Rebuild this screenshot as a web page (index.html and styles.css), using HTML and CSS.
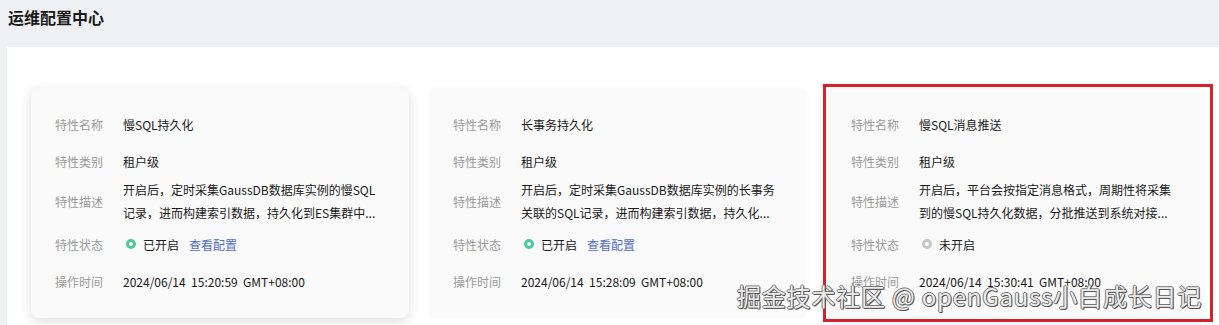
FILE: index.html
```html
<!DOCTYPE html>
<html lang="zh-CN">
<head>
    <meta charset="UTF-8">
    <meta name="viewport" content="width=device-width, initial-scale=1.0">
    <title>运维配置中心</title>
    <link rel="stylesheet" href="styles.css">
</head>
<body>
    <h1 class="page-title">运维配置中心</h1>

    <div class="panel">
        <div class="card-list">
            <div class="card card-active">
                <div class="row">
                    <span class="label">特性名称</span>
                    <span class="value">慢SQL持久化</span>
                </div>
                <div class="row">
                    <span class="label">特性类别</span>
                    <span class="value">租户级</span>
                </div>
                <div class="row row-desc">
                    <span class="label">特性描述</span>
                    <span class="value desc">开启后，定时采集GaussDB数据库实例的慢SQL<br>记录，进而构建索引数据，持久化到ES集群中...</span>
                </div>
                <div class="row">
                    <span class="label">特性状态</span>
                    <span class="value status">
                        <span class="dot dot-on"></span>
                        <span>已开启</span>
                        <a class="link" href="#">查看配置</a>
                    </span>
                </div>
                <div class="row">
                    <span class="label">操作时间</span>
                    <span class="value time">2024/06/14  15:20:59  GMT+08:00</span>
                </div>
            </div>

            <div class="card">
                <div class="row">
                    <span class="label">特性名称</span>
                    <span class="value">长事务持久化</span>
                </div>
                <div class="row">
                    <span class="label">特性类别</span>
                    <span class="value">租户级</span>
                </div>
                <div class="row row-desc">
                    <span class="label">特性描述</span>
                    <span class="value desc">开启后，定时采集GaussDB数据库实例的长事务<br>关联的SQL记录，进而构建索引数据，持久化...</span>
                </div>
                <div class="row">
                    <span class="label">特性状态</span>
                    <span class="value status">
                        <span class="dot dot-on"></span>
                        <span>已开启</span>
                        <a class="link" href="#">查看配置</a>
                    </span>
                </div>
                <div class="row">
                    <span class="label">操作时间</span>
                    <span class="value time">2024/06/14  15:28:09  GMT+08:00</span>
                </div>
            </div>

            <div class="card">
                <div class="row">
                    <span class="label">特性名称</span>
                    <span class="value">慢SQL消息推送</span>
                </div>
                <div class="row">
                    <span class="label">特性类别</span>
                    <span class="value">租户级</span>
                </div>
                <div class="row row-desc">
                    <span class="label">特性描述</span>
                    <span class="value desc">开启后，平台会按指定消息格式，周期性将采集<br>到的慢SQL持久化数据，分批推送到系统对接...</span>
                </div>
                <div class="row">
                    <span class="label">特性状态</span>
                    <span class="value status">
                        <span class="dot dot-off"></span>
                        <span>未开启</span>
                    </span>
                </div>
                <div class="row">
                    <span class="label">操作时间</span>
                    <span class="value time">2024/06/14  15:30:41  GMT+08:00</span>
                </div>
            </div>
        </div>
    </div>

    <!-- 截图上的标注框和水印 -->
    <div class="mark-box"></div>
    <div class="watermark">掘金技术社区 @ openGauss小白成长日记</div>
</body>
</html>
```

FILE: styles.css
```css
body {
    margin: 0;
    background-color: #eff0f3;
    font-family: "Noto Sans CJK SC", "Noto Sans", sans-serif;
    color: #191919;
    overflow: hidden;
    position: relative;
    height: 325px;
}

.page-title {
    margin: 0;
    padding: 6px 0 0 8px;
    height: 47px;
    box-sizing: border-box;
    font-size: 16px;
    line-height: 22px;
    font-weight: bold;
    color: #191919;
}

.panel {
    margin-left: 7px;
    background-color: #fff;
    padding: 41px 0 20px 24px;
}

.card-list {
    display: flex;
    gap: 20px;
}

.card {
    width: 378px;
    height: 230px;
    box-sizing: border-box;
    padding: 26px 24px 0 24px;
    background-color: #fafafa;
    border-radius: 8px;
    display: flex;
    flex-direction: column;
    box-shadow: 0 0 6px rgba(0, 0, 0, 0.03);
}

.card-active {
    box-shadow: 0 3px 12px rgba(0, 0, 0, 0.14);
}

.row {
    display: flex;
    align-items: center;
    min-height: 20px;
    margin-bottom: 17px;
    font-size: 12px;
}

.row-desc {
    margin-top: -10px;
    margin-bottom: 10px;
}

.label {
    width: 68px;
    flex-shrink: 0;
    color: #9a9a9a;
}

.value {
    color: #191919;
}

.desc {
    line-height: 23px;
    white-space: nowrap;
}

.status {
    display: flex;
    align-items: center;
}

.dot {
    width: 10px;
    height: 10px;
    box-sizing: border-box;
    border-radius: 50%;
    margin: 0 7px 0 3px;
}

.dot-on {
    border: 3px solid #4dc99b;
}

.dot-off {
    border: 3px solid #c8c8c8;
}

.link {
    margin-left: 10px;
    color: #526ecc;
    text-decoration: none;
}

.time {
    white-space: pre;
}

.mark-box {
    position: absolute;
    left: 823px;
    top: 84px;
    width: 390px;
    height: 238px;
    box-sizing: border-box;
    border: 3px solid #d8202a;
}

.watermark {
    position: absolute;
    left: 737px;
    top: 279px;
    font-size: 24px;
    line-height: 34px;
    letter-spacing: 0.8px;
    color: #ececec;
    white-space: nowrap;
    text-shadow: 1px 1px 0 #555, -1px 0 0 #777, 0 -1px 0 #777, 1px 0 0 #666, 0 1px 0 #666;
}
```
